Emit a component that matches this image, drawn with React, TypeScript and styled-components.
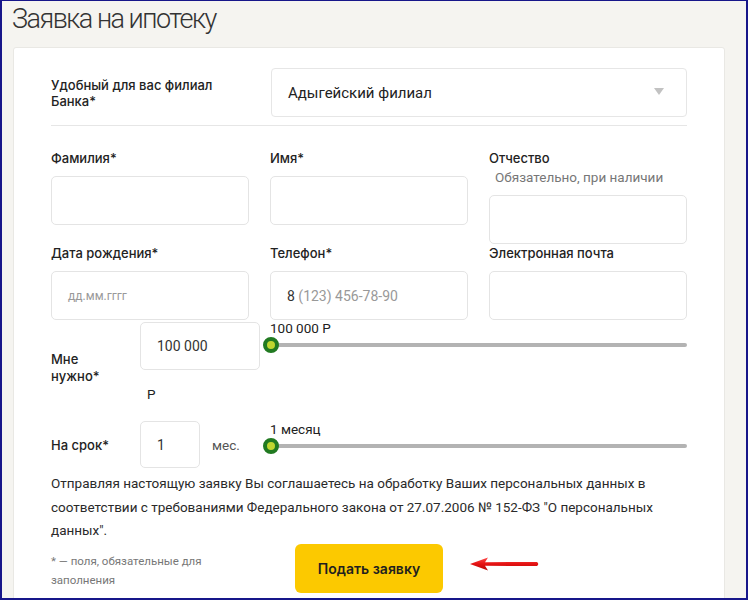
import React from 'react'
import styled, { createGlobalStyle } from 'styled-components'

const font = `Roboto, "Liberation Sans", Arial, sans-serif`
const labelFont = `Inter, Roboto, "Liberation Sans", Arial, sans-serif`

const GlobalStyle = createGlobalStyle`
  html, body {
    margin: 0;
    padding: 0;
    background: #f5f4f0;
  }
  * {
    box-sizing: border-box;
  }
`

const Frame = styled.div`
  width: 748px;
  height: 600px;
  overflow: hidden;
  border: 2px solid #17168a;
  border-top-width: 1px;
  background: #f5f4f0;
  padding: 0 21px 0 11px;
  font-family: ${font};
  color: #222;
`

const Title = styled.h1`
  margin: 0 0 10px -1px;
  font-size: 27px;
  line-height: 36px;
  font-weight: 300;
  letter-spacing: -1.5px;
  color: #333;
`

const Card = styled.div`
  background: #fff;
  border: 1px solid #e9e8e4;
  border-radius: 3px;
  padding: 20px 37px 20px;
`

const BranchRow = styled.div`
  display: grid;
  grid-template-columns: 198px 1fr;
  column-gap: 22px;
  align-items: center;
  padding-bottom: 8px;
  border-bottom: 1px solid #e6e6e6;
`

const Label = styled.div`
  font-family: ${labelFont};
  font-size: 13px;
  line-height: 16px;
  font-weight: 500;
  color: #222;
`

const Select = styled.div`
  height: 49px;
  display: flex;
  align-items: center;
  justify-content: space-between;
  padding: 0 22px 0 16px;
  border: 1px solid #e6e6e6;
  border-radius: 4px;
  font-size: 15px;
  color: #222;
`

const Caret = styled.span`
  width: 0;
  height: 0;
  border-left: 5px solid transparent;
  border-right: 5px solid transparent;
  border-top: 7px solid #c2c2c2;
  margin-top: -2px;
`

const FieldsGrid = styled.div`
  display: grid;
  grid-template-columns: repeat(3, 198px);
  column-gap: 21px;
  padding-top: 23px;
`

const Field = styled.div`
  display: flex;
  flex-direction: column;
`

const FieldLabel = styled.div`
  font-family: ${labelFont};
  font-size: 13px;
  line-height: 18px;
  font-weight: 500;
  color: #222;
  margin-bottom: 9px;
`

const Hint = styled.div`
  font-family: ${font};
  font-size: 13.5px;
  font-weight: 400;
  color: #777;
  padding-left: 6px;
  margin-top: 1px;
`

const Input = styled.div<{ $width?: number; $height?: number }>`
  width: ${p => (p.$width ? `${p.$width}px` : '100%')};
  height: ${p => p.$height ?? 49}px;
  display: flex;
  align-items: center;
  padding-left: 16px;
  border: 1px solid #e4e4e4;
  border-radius: 5px;
  font-size: 14px;
  color: #333;
  background: #fff;
`

const Placeholder = styled.span<{ $small?: boolean }>`
  color: #999;
  font-size: ${p => (p.$small ? 12 : 14)}px;
`

const LoanGrid = styled.div`
  display: grid;
  grid-template-columns: 89px 123px 1fr;
  row-gap: 18px;
  margin-top: 2px;
`

const LoanLabel = styled.div<{ $offset?: number }>`
  font-family: ${labelFont};
  font-size: 13px;
  line-height: 17px;
  font-weight: 500;
  align-self: start;
  margin-top: ${p => p.$offset ?? 0}px;
`

const InputCol = styled.div`
  display: flex;
  flex-direction: column;
`

const InputLine = styled.div`
  display: flex;
  align-items: center;
`

const Unit = styled.div<{ $below?: boolean }>`
  font-size: 13.5px;
  line-height: 18px;
  color: ${p => (p.$below ? '#222' : '#555')};
  margin: ${p => (p.$below ? '15px 0 0 7px' : '0 0 0 12px')};
`

const Slider = styled.div<{ $shift?: number }>`
  display: flex;
  flex-direction: column;
  margin-top: ${p => p.$shift ?? 0}px;
`

const SliderValue = styled.div`
  font-size: 13.5px;
  line-height: 14px;
  color: #222;
  padding-left: 7px;
`

const Track = styled.div`
  position: relative;
  height: 4px;
  margin: 8px 0 0 8px;
  border-radius: 2px;
  background: #b3b3b3;
`

const Thumb = styled.span`
  position: absolute;
  left: -8px;
  top: -6px;
  width: 16px;
  height: 16px;
  border-radius: 50%;
  background: #bfd630;
  border: 4.5px solid #217a21;
`

const Agreement = styled.p`
  margin: 4px 0 0;
  font-size: 13.5px;
  line-height: 23.5px;
  color: #2a2a2a;
`

const Footer = styled.div`
  display: grid;
  grid-template-columns: 244px 148px auto;
  align-items: start;
  margin-top: 1px;
`

const Footnote = styled.div`
  max-width: 175px;
  margin-top: 8px;
  font-size: 11.5px;
  line-height: 19px;
  color: #777;
`

const SubmitButton = styled.button`
  height: 49px;
  border: none;
  border-radius: 6px;
  background: #fcc900;
  font-family: ${labelFont};
  font-size: 14px;
  font-weight: 600;
  color: #1f1f1f;
  cursor: pointer;
`

const Pointer = styled.svg`
  margin: 11px 0 0 26px;
`

function Arrow() {
  return (
    <Pointer width="72" height="18" viewBox="0 0 72 18">
      <defs>
        <linearGradient id="arrowShade" x1="0" y1="0" x2="0" y2="1">
          <stop offset="0" stopColor="#ff4a4a" />
          <stop offset="0.5" stopColor="#e41212" />
          <stop offset="1" stopColor="#b50808" />
        </linearGradient>
      </defs>
      <path
        d="M1 9 L19 2.5 L16 7.2 L68 7 Q70.5 9 68 11 L16 10.8 L19 15.5 Z"
        fill="url(#arrowShade)"
      />
    </Pointer>
  )
}

export default function App() {
  return (
    <Frame>
      <GlobalStyle />
      <Title>Заявка на ипотеку</Title>
      <Card>
        <BranchRow>
          <Label>
            Удобный для вас филиал
            <br />
            Банка*
          </Label>
          <Select>
            Адыгейский филиал
            <Caret />
          </Select>
        </BranchRow>

        <FieldsGrid>
          <Field>
            <FieldLabel>Фамилия*</FieldLabel>
            <Input />
          </Field>
          <Field>
            <FieldLabel>Имя*</FieldLabel>
            <Input />
          </Field>
          <Field>
            <FieldLabel>
              Отчество
              <Hint>Обязательно, при наличии</Hint>
            </FieldLabel>
            <Input />
          </Field>
          <Field>
            <FieldLabel>Дата рождения*</FieldLabel>
            <Input>
              <Placeholder $small>дд.мм.гггг</Placeholder>
            </Input>
          </Field>
          <Field>
            <FieldLabel>Телефон*</FieldLabel>
            <Input>
              8&nbsp;<Placeholder>(123) 456-78-90</Placeholder>
            </Input>
          </Field>
          <Field>
            <FieldLabel>Электронная почта</FieldLabel>
            <Input />
          </Field>
        </FieldsGrid>

        <LoanGrid>
          <LoanLabel $offset={29}>
            Мне
            <br />
            нужно*
          </LoanLabel>
          <InputCol>
            <Input $width={120} $height={48}>100 000</Input>
            <Unit $below>Р</Unit>
          </InputCol>
          <Slider $shift={-1}>
            <SliderValue>100 000 Р</SliderValue>
            <Track>
              <Thumb />
            </Track>
          </Slider>

          <LoanLabel $offset={16}>На срок*</LoanLabel>
          <InputLine>
            <Input $width={60} $height={47}>1</Input>
            <Unit>мес.</Unit>
          </InputLine>
          <Slider $shift={1}>
            <SliderValue>1 месяц</SliderValue>
            <Track>
              <Thumb />
            </Track>
          </Slider>
        </LoanGrid>

        <Agreement>
          Отправляя настоящую заявку Вы соглашаетесь на обработку Ваших персональных данных в
          соответствии с требованиями Федерального закона от 27.07.2006 № 152-ФЗ "О персональных
          данных".
        </Agreement>

        <Footer>
          <Footnote>* — поля, обязательные для заполнения</Footnote>
          <SubmitButton>Подать заявку</SubmitButton>
          <Arrow />
        </Footer>
      </Card>
    </Frame>
  )
}
